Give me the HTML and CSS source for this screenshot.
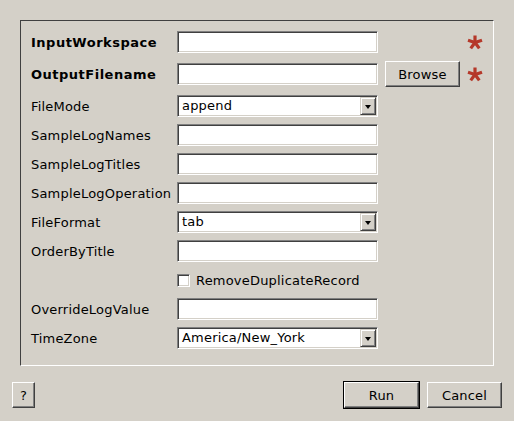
FILE: index.html
```html
<!DOCTYPE html>
<html>
<head>
<meta charset="utf-8">
<link rel="stylesheet" href="styles.css">
</head>
<body>
<div class="frame">
  <div class="row tall first">
    <div class="label bold">InputWorkspace</div>
    <div class="field"></div>
    <div class="extra"></div>
    <svg class="star" width="16" height="16" viewBox="0 0 16 16"><g stroke="#b5382a" stroke-width="3.2" stroke-linecap="butt"><line x1="8" y1="8.5" x2="8" y2="1.5"/><line x1="8" y1="8.5" x2="15" y2="6.2"/><line x1="8" y1="8.5" x2="1" y2="6.2"/><line x1="8" y1="8.5" x2="12.3" y2="14.4"/><line x1="8" y1="8.5" x2="3.7" y2="14.4"/></g></svg>
  </div>
  <div class="row tall second">
    <div class="label bold">OutputFilename</div>
    <div class="field"></div>
    <button class="btn browse">Browse</button>
    <svg class="star" width="16" height="16" viewBox="0 0 16 16"><g stroke="#b5382a" stroke-width="3.2" stroke-linecap="butt"><line x1="8" y1="8.5" x2="8" y2="1.5"/><line x1="8" y1="8.5" x2="15" y2="6.2"/><line x1="8" y1="8.5" x2="1" y2="6.2"/><line x1="8" y1="8.5" x2="12.3" y2="14.4"/><line x1="8" y1="8.5" x2="3.7" y2="14.4"/></g></svg>
  </div>
  <div class="row third">
    <div class="label">FileMode</div>
    <div class="field combo"><span class="val">append</span><span class="arrow"></span></div>
  </div>
  <div class="row">
    <div class="label">SampleLogNames</div>
    <div class="field"></div>
  </div>
  <div class="row">
    <div class="label">SampleLogTitles</div>
    <div class="field"></div>
  </div>
  <div class="row">
    <div class="label">SampleLogOperation</div>
    <div class="field"></div>
  </div>
  <div class="row">
    <div class="label">FileFormat</div>
    <div class="field combo"><span class="val">tab</span><span class="arrow"></span></div>
  </div>
  <div class="row">
    <div class="label">OrderByTitle</div>
    <div class="field"></div>
  </div>
  <div class="row">
    <div class="label"></div>
    <span class="check"></span><span class="checktext">RemoveDuplicateRecord</span>
  </div>
  <div class="row">
    <div class="label">OverrideLogValue</div>
    <div class="field"></div>
  </div>
  <div class="row">
    <div class="label">TimeZone</div>
    <div class="field combo"><span class="val">America/New_York</span><span class="arrow"></span></div>
  </div>
</div>
<div class="bar">
  <button class="btn help">?</button>
  <div class="spacer"></div>
  <button class="btn default">Run</button>
  <button class="btn cancel">Cancel</button>
</div>
</body>
</html>
```

FILE: styles.css
```css
html, body {
  margin: 0;
  padding: 0;
  background: #d4d0c8;
  width: 514px;
  height: 421px;
  overflow: hidden;
  font-family: "DejaVu Sans", sans-serif;
  font-size: 13px;
  letter-spacing: 0.2px;
  color: #000;
}

.frame {
  margin: 20px 20px 0 20px;
  height: 346px;
  box-sizing: border-box;
  border-top: 1px solid #404040;
  border-left: 1px solid #404040;
  border-right: 1px solid #ffffff;
  border-bottom: 1px solid #ffffff;
  padding: 8px 0 0 10px;
  display: flex;
  flex-direction: column;
}

.row {
  display: flex;
  align-items: center;
  height: 22px;
  margin-top: 7px;
  flex-shrink: 0;
}
.row.tall { height: 26px; margin-top: 6px; }
.row.first { margin-top: 0; }
.row.third { margin-top: 8px; }

.label {
  width: 146px;
  flex-shrink: 0;
  white-space: nowrap;
}
.bold { font-weight: bold; letter-spacing: 0.5px; }

.field {
  width: 201px;
  height: 22px;
  box-sizing: border-box;
  background: #fff;
  border-top: 1px solid #808080;
  border-left: 1px solid #808080;
  border-right: 1px solid #ffffff;
  border-bottom: 1px solid #ffffff;
  box-shadow: inset 1px 1px 0 #404040, inset -1px -1px 0 #d4d0c8;
  flex-shrink: 0;
}

.combo {
  display: flex;
  align-items: center;
  padding-left: 4px;
  position: relative;
}
.combo .val { flex: 1; line-height: 18px; }
.combo .arrow {
  width: 16px;
  height: 18px;
  box-sizing: border-box;
  background: #d4d0c8;
  border-top: 1px solid #d4d0c8;
  border-left: 1px solid #d4d0c8;
  border-right: 1px solid #404040;
  border-bottom: 1px solid #404040;
  box-shadow: inset 1px 1px 0 #ffffff, inset -1px -1px 0 #808080;
  margin-right: 1px;
  position: relative;
}
.combo .arrow::after {
  content: "";
  position: absolute;
  left: 4px;
  top: 7px;
  border-left: 3.5px solid transparent;
  border-right: 3.5px solid transparent;
  border-top: 4px solid #000;
}

.extra {
  width: 75px;
  margin-left: 7px;
  flex-shrink: 0;
}
.star {
  margin-left: 7px;
  flex-shrink: 0;
}

.btn {
  font-family: "DejaVu Sans", sans-serif;
  font-size: 13px;
  letter-spacing: 0.2px;
  color: #000;
  background: #d4d0c8;
  box-sizing: border-box;
  height: 26px;
  padding: 0;
  margin: 0;
  border-top: 1px solid #ffffff;
  border-left: 1px solid #ffffff;
  border-right: 1px solid #404040;
  border-bottom: 1px solid #404040;
  box-shadow: inset -1px -1px 0 #808080;
  border-radius: 0;
  flex-shrink: 0;
}
.btn.browse {
  width: 75px;
  margin-left: 7px;
}

.check {
  width: 13px;
  height: 13px;
  box-sizing: border-box;
  background: #fff;
  border-top: 1px solid #808080;
  border-left: 1px solid #808080;
  border-right: 1px solid #ffffff;
  border-bottom: 1px solid #ffffff;
  box-shadow: inset 1px 1px 0 #404040, inset -1px -1px 0 #d4d0c8;
  flex-shrink: 0;
}
.checktext { margin-left: 6px; }

.bar {
  display: flex;
  align-items: center;
  padding: 0 12px;
  margin-top: 16px;
}
.spacer { flex: 1; }
.btn.help { width: 23px; }
.btn.default {
  width: 75px;
  outline: 1px solid #000;
}
.btn.cancel {
  width: 75px;
  margin-left: 8px;
}
```
